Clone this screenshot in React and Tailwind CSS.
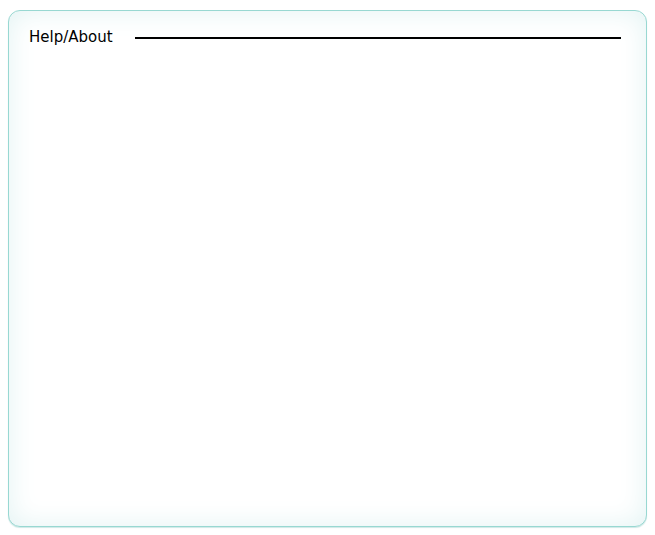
export default function App() {
  return (
    <div className="h-[535px] w-[655px] bg-white px-2 pt-[10px] pb-[8px]">
      <section className="flex h-full flex-col rounded-[12px] border border-[#98d8d2] bg-white shadow-[inset_0_0_28px_#e2f3f3,0_1px_1px_#cfe9e7]">
        <div className="flex items-center gap-[22px] pl-5 pr-[25px] pt-[16px]">
          <h2 className="text-[15px] leading-5 tracking-[0px] text-black [font-family:'DejaVu_Sans','Liberation_Sans',sans-serif]">
            Help/About
          </h2>
          <div className="mt-[1px] h-[2px] flex-1 bg-black" />
        </div>
      </section>
    </div>
  )
}
